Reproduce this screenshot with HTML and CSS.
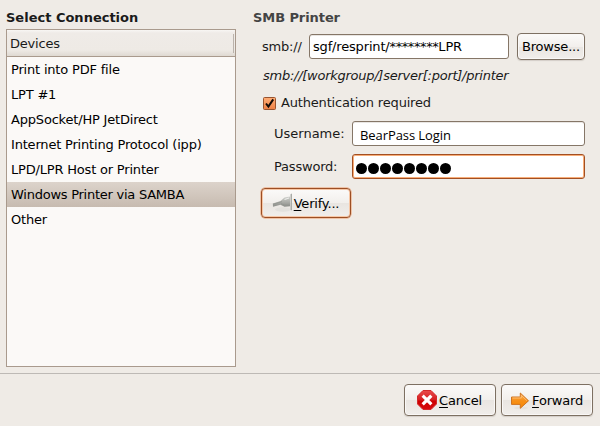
FILE: index.html
```html
<!DOCTYPE html>
<html lang="en">
<head>
<meta charset="utf-8">
<title>New Printer</title>
<link rel="stylesheet" href="styles.css">
</head>
<body>
<main class="content">
  <section class="connections">
    <h2 class="title">Select Connection</h2>
    <div class="list">
      <div class="list-head"><span>Devices</span><i class="grip"></i></div>
      <ul class="rows">
        <li>Print into PDF file</li>
        <li>LPT #1</li>
        <li>AppSocket/HP JetDirect</li>
        <li>Internet Printing Protocol (ipp)</li>
        <li>LPD/LPR Host or Printer</li>
        <li class="selected">Windows Printer via SAMBA</li>
        <li>Other</li>
      </ul>
    </div>
  </section>
  <section class="details">
    <h2 class="title muted">SMB Printer</h2>
    <div class="uri-row">
      <label class="scheme">smb://</label>
      <div class="field uri">sgf/resprint/<span class="stars">********</span>LPR</div>
      <div class="button browse">Browse...</div>
    </div>
    <p class="hint">smb://[workgroup/]server[:port]/printer</p>
    <div class="auth">
      <svg class="check" width="13" height="13" viewBox="0 0 13 13">
        <defs><linearGradient id="boxFill" x2="0" y2="1"><stop offset="0" stop-color="#ffad75"/><stop offset="1" stop-color="#ee8146"/></linearGradient></defs>
        <rect x=".5" y=".5" width="12" height="12" rx="1" fill="url(#boxFill)" stroke="#98532f"/>
        <path d="M3 6.5 5.4 9.6 10.2 2.4" fill="none" stroke="#120b07" stroke-width="2"/>
      </svg>
      <span>Authentication required</span>
    </div>
    <div class="form">
      <label class="user-label">Username:</label>
      <div class="field username">BearPass Login</div>
      <label class="pass-label">Password:</label>
      <div class="field password"><i></i><i></i><i></i><i></i><i></i><i></i><i></i><i></i></div>
    </div>
    <div class="button verify">
      <svg width="22" height="20" viewBox="0 0 22 20">
        <defs><linearGradient id="plug" x2="0" y2="1"><stop offset="0" stop-color="#cfd0cc"/><stop offset="1" stop-color="#8b8d88"/></linearGradient></defs>
        <ellipse cx="11" cy="16.5" rx="8" ry="2.2" fill="#e3e1dd"/>
        <path d="M.8 10.6 8.5 8l4-3.4L18 3.5v9.8l-5.5.4-4-2L1 13.8z" fill="url(#plug)"/>
        <path d="M1 11.4 10 8.6M9 10.6l4 1.8h5" fill="none" stroke="#92948f" stroke-width=".8"/>
        <path d="M12.5 6.5 17 5" stroke="#ededeb" stroke-width="1.2"/>
        <path d="M18.5 1.2 20 .5v17l-1.5-.7z" fill="#a9aba7"/>
      </svg><span class="text"><u>V</u>erify...</span>
    </div>
  </section>
</main>
<footer class="actions">
  <div class="button cancel">
    <svg width="20" height="20" viewBox="0 0 20 20">
      <defs><linearGradient id="stop" x2="0" y2="1"><stop offset="0" stop-color="#e94b4b"/><stop offset=".5" stop-color="#d51c20"/><stop offset=".55" stop-color="#cc0000"/><stop offset="1" stop-color="#d80c10"/></linearGradient></defs>
      <path d="M6 .5h8L19.5 6v8L14 19.5H6L.5 14V6z" fill="url(#stop)" stroke="#d3282b"/>
      <path d="m6.8 6.8 6.4 6.4m0-6.4-6.4 6.4" stroke="#fff" stroke-width="3.2" stroke-linecap="square"/>
    </svg><span class="text"><u>C</u>ancel</span>
  </div>
  <div class="button forward">
    <svg width="20" height="20" viewBox="0 0 20 20">
      <defs><linearGradient id="arrow" x2="0" y2="1"><stop offset="0" stop-color="#ffb45d"/><stop offset=".5" stop-color="#f79018"/><stop offset="1" stop-color="#f88700"/></linearGradient></defs>
      <ellipse cx="11" cy="18" rx="7" ry="1.3" fill="#e6e2dd"/>
      <path d="M1.5 7h8.8V3l8.2 7.8-8.2 7.5v-3.9H1.5z" fill="url(#arrow)" stroke="#cf7420" stroke-linejoin="round"/>
      <path d="M2.5 8h8.8V5.4l5.6 5.3" fill="none" stroke="#ffc47d" stroke-width=".8"/>
    </svg><span class="text"><u>F</u>orward</span>
  </div>
</footer>
</body>
</html>
```

FILE: styles.css
```css
* { box-sizing: border-box; }
body {
  margin: 0;
  width: 600px;
  height: 426px;
  overflow: hidden;
  display: flex;
  flex-direction: column;
  background: #efebe6;
  color: #1a1a1a;
  font: 13px/15px "DejaVu Sans", sans-serif;
  white-space: nowrap;
}
.content { height: 373px; display: flex; gap: 17px; padding: 10px 15px 6px 6px; }
.connections { width: 230px; }
.title { margin: 0; font-size: 13px; line-height: 15px; height: 19px; font-weight: bold; }
.muted { color: #444; letter-spacing: -.08px; }
.list { height: 338px; border: 1px solid #a99a8d; background: #fbf9f7; color: #000; }
.list-head {
  display: flex;
  justify-content: space-between;
  align-items: center;
  height: 27px;
  padding: 0 1px 0 3px;
  border-bottom: 1px solid #a99a8d;
  background: linear-gradient(#f8f6f4 0, #efebe7 3px, #eeeae5 20px, #dfd9d2 100%);
  color: #1a1a1a;
  letter-spacing: -.2px;
}
.grip { width: 1px; height: 19px; background: #bbb3ac; }
.rows { margin: 0; padding: 0; list-style: none; letter-spacing: -.19px; }
.rows li { height: 25px; padding: 5px 0 0 4px; }
.rows .selected { background: linear-gradient(#dcd3cb, #c7bbb0); letter-spacing: -.25px; }
.details { width: 332px; }
.uri-row { display: flex; align-items: center; margin-top: 4px; padding-left: 9px; height: 27px; }
.scheme { width: 47px; letter-spacing: -.2px; }
.field {
  height: 25px;
  border: 1px solid #857667;
  border-radius: 3px;
  background: #fff;
  color: #000;
  box-shadow: inset 0 1px 0 #e9e6e3;
}
.uri { width: 200px; padding: 4px 3px; margin-right: 8px; letter-spacing: -.17px; }
.stars { letter-spacing: -.4px; }
.button {
  display: flex;
  align-items: center;
  justify-content: center;
  border: 1px solid #7d7062;
  border-radius: 4px;
  background: linear-gradient(#fbfaf9, #f2efec 50%, #e9e5e1 51%, #f1eeeb);
  box-shadow: 0 1px 1px #d3cec8, inset 0 0 0 1px #faf8f7;
  color: #000;
  letter-spacing: -.2px;
}
.browse { width: 68px; height: 27px; }
.hint { margin: 8px 0 0 10px; font-style: italic; height: 15px; letter-spacing: -.26px; }
.auth { display: flex; align-items: center; margin: 12px 0 0 10px; height: 15px; gap: 5px; letter-spacing: -.18px; }
.check { margin-top: 2px; }
.form { display: grid; grid-template-columns: 78px 233px; row-gap: 8px; margin: 11px 0 0 21px; align-items: center; }
.pass-label { letter-spacing: -.2px; }
.username { padding: 6px 7px; font: 13px/15px "Open Sans", sans-serif; letter-spacing: -.08px; }
.password { display: flex; gap: 1px; padding: 8px 3px; border-color: #a34f22; box-shadow: inset 0 0 0 1px #f7ad78; }
.password i { width: 11px; height: 11px; border-radius: 50%; background: #000; }
.verify { width: 90px; height: 30px; margin: 9px 0 0 8px; border-color: #9c4e24; box-shadow: 0 0 0 .5px #ee9a66, inset 0 0 0 1px #f7c7a6; }
.text u { text-underline-offset: 2px; text-decoration-thickness: 1px; text-decoration-skip-ink: none; }
.actions { height: 53px; display: flex; justify-content: flex-end; gap: 5px; padding: 10px 7px 0 0; border-top: 1px solid #bdb9b5; }
.cancel, .forward { width: 92px; height: 32px; gap: 2px; }
.button svg { margin-left: -1px; }
```
